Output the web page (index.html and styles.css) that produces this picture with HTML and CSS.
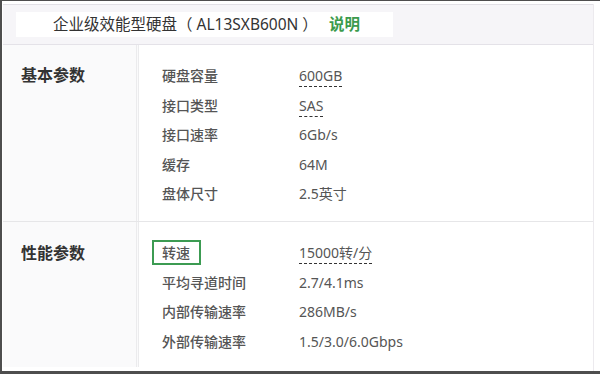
FILE: index.html
```html
<!DOCTYPE html>
<html lang="zh-CN">
<head>
    <meta charset="UTF-8">
    <meta name="viewport" content="width=device-width, initial-scale=1.0">
    <title>企业级效能型硬盘 参数</title>
    <link rel="stylesheet" href="styles.css">
</head>
<body>
    <div class="frame">
        <div class="panel">
            <div class="head">
                <div class="head-title">
                    <span class="name">企业级效能型硬盘（ AL13SXB600N ）</span>
                    <span class="note">说明</span>
                </div>
            </div>

            <div class="group first">
                <div class="group-name">基本参数</div>
                <div class="rows">
                    <div class="row"><span class="key">硬盘容量</span><span class="val"><span class="tip">600GB</span></span></div>
                    <div class="row"><span class="key">接口类型</span><span class="val"><span class="tip">SAS</span></span></div>
                    <div class="row"><span class="key">接口速率</span><span class="val">6Gb/s</span></div>
                    <div class="row"><span class="key">缓存</span><span class="val">64M</span></div>
                    <div class="row"><span class="key">盘体尺寸</span><span class="val">2.5英寸</span></div>
                </div>
            </div>

            <div class="group second">
                <div class="group-name">性能参数</div>
                <div class="rows">
                    <div class="row"><span class="key"><span class="mark">转速</span></span><span class="val"><span class="tip">15000转/分</span></span></div>
                    <div class="row"><span class="key">平均寻道时间</span><span class="val">2.7/4.1ms</span></div>
                    <div class="row"><span class="key">内部传输速率</span><span class="val">286MB/s</span></div>
                    <div class="row"><span class="key">外部传输速率</span><span class="val">1.5/3.0/6.0Gbps</span></div>
                </div>
            </div>
        </div>
    </div>
</body>
</html>
```

FILE: styles.css
```css
html, body {
    margin: 0;
    padding: 0;
    background: #fff;
}
body {
    font-family: "Noto Sans", "Noto Sans CJK SC", sans-serif;
    color: #555;
}
.frame {
    width: 600px;
    height: 374px;
    box-sizing: border-box;
    border-top: 1px solid #4e4e4e;
    border-left: 2px solid #4e4e4e;
    border-bottom: 3px solid #4e4e4e;
    padding: 3px 6px 0 1px;
    background: #fff;
}
.panel {
    height: 100%;
    border-right: 1px solid #eceaee;
    box-sizing: border-box;
}
.head {
    height: 41px;
    box-sizing: border-box;
    background: #f6f5f8;
    border-top: 1px solid #e2e0e6;
    border-bottom: 1px solid #e4e2e8;
    padding: 7px 0 0 13px;
}
.head-title {
    width: 377px;
    height: 25px;
    background: #fff;
    box-sizing: border-box;
    padding-left: 37px;
    line-height: 25px;
    font-size: 15.5px;
    white-space: nowrap;
}
.head-title .name {
    color: #333;
}
.head-title .note {
    color: #3c9b4d;
    font-weight: bold;
    margin-left: 7px;
}
.group {
    display: flex;
}
.group.first {
    height: 176px;
    border-bottom: 1px solid #e6e6e8;
}
.group.second {
    height: 145px;
}
.group-name {
    width: 136px;
    flex: none;
    box-sizing: border-box;
    background: #fafafb;
    border-right: 3px double #ebebed;
    padding-left: 18px;
    font-size: 16px;
    font-weight: bold;
    color: #333;
    line-height: 30px;
}
.first .group-name {
    padding-top: 15px;
}
.second .group-name {
    padding-top: 16px;
}
.rows {
    flex: 1;
    padding-left: 23px;
}
.first .rows {
    padding-top: 16px;
}
.second .rows {
    padding-top: 16px;
}
.row {
    display: flex;
    height: 29.6px;
    line-height: 30px;
    font-size: 14px;
}
.key {
    width: 137px;
    flex: none;
    font-weight: 500;
    color: #555;
}
.val {
    color: #555;
}
.tip {
    border-bottom: 1px dashed #333;
    padding-bottom: 1px;
}
.mark {
    display: inline-block;
    line-height: 21px;
    border: 2px solid #3c9b52;
    padding: 0 9px 0 8px;
    margin-left: -10px;
    margin-top: 1px;
}
```
